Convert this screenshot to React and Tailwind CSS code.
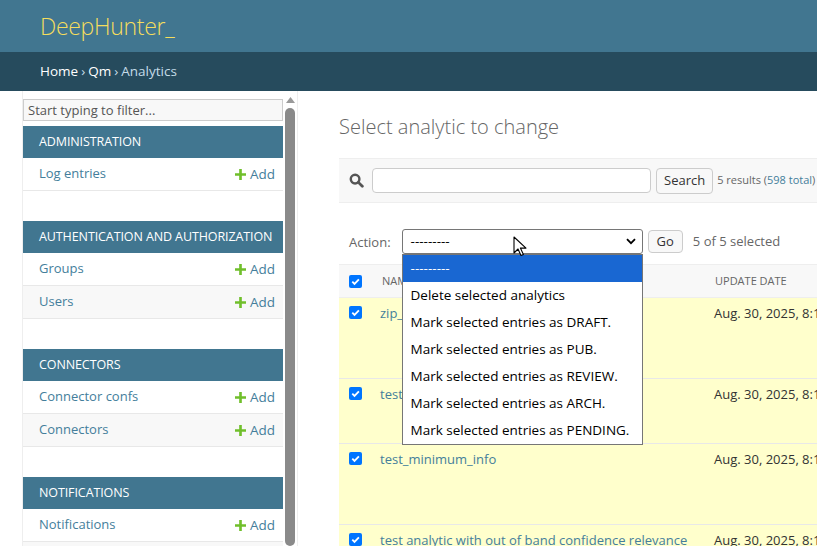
import { useState } from "react";

const font = { fontFamily: '"Open Sans", "Noto Sans", sans-serif' };

const modules = [
  { name: "Administration", rows: ["Log entries"] },
  { name: "Authentication and Authorization", rows: ["Groups", "Users"] },
  { name: "Connectors", rows: ["Connector confs", "Connectors"] },
  { name: "Notifications", rows: ["Notifications", "Notification levels"] },
];

const actions = [
  "---------",
  "Delete selected analytics",
  "Mark selected entries as DRAFT.",
  "Mark selected entries as PUB.",
  "Mark selected entries as REVIEW.",
  "Mark selected entries as ARCH.",
  "Mark selected entries as PENDING.",
];

const rows = [
  { name: "zip_file_analytic", h: "h-[81px]" },
  { name: "test_analytic_full", h: "h-[65px]" },
  { name: "test_minimum_info", h: "h-[81px]" },
  { name: "test analytic with out of band confidence relevance", h: "h-[81px]" },
];

function PlusIcon() {
  return (
    <svg width="11" height="11" viewBox="0 0 10 10" className="mr-[4px]">
      <path d="M3.8 0h2.4v3.8H10v2.4H6.2V10H3.8V6.2H0V3.8h3.8z" fill="#70bf2b" />
    </svg>
  );
}

function Checkbox() {
  return (
    <span className="inline-flex w-[13px] h-[13px] rounded-[2px] bg-[#0075ff] items-center justify-center">
      <svg width="11" height="11" viewBox="0 0 12 12">
        <path d="M2.5 6.2l2.4 2.4 4.8-5" stroke="#fff" strokeWidth="2" fill="none" />
      </svg>
    </span>
  );
}

function Sidebar() {
  return (
    <div className="flex shrink-0 h-full">
      <div className="w-[23px] border-r border-[#eeeeee]" />
      <div className="w-[275px] flex border-r border-[#eeeeee] overflow-hidden">
        <div className="w-[260px] pt-[6px]">
          <input
            className="w-[260px] h-[22px] border border-[#cccccc] bg-[#f8f8f8] px-[4px] text-[13px] text-[#333] placeholder:text-[#555] outline-none"
            placeholder="Start typing to filter..."
          />
          <div className="mt-[5px]">
            {modules.map((m) => (
              <div key={m.name} className="mb-[30px]">
                <div className="h-[32px] bg-[#417690] px-[16px] flex items-center text-[12.5px] text-white uppercase whitespace-nowrap tracking-[-0.1px]">
                  {m.name}
                </div>
                {m.rows.map((r, i) => (
                  <div
                    key={r}
                    className={`h-[33px] flex items-center justify-between pl-[16px] pr-[8px] border-b border-[#e8e8e8] text-[13px] text-[#447e9b] ${i % 2 ? "bg-[#f8f8f8]" : "bg-white"}`}
                  >
                    <span>{r}</span>
                    <span className="flex items-center text-[13.5px]">
                      <PlusIcon />
                      Add
                    </span>
                  </div>
                ))}
              </div>
            ))}
          </div>
        </div>
        <div className="w-[15px] flex flex-col items-center pt-[6px]">
          <svg width="9" height="6" viewBox="0 0 9 6">
            <path d="M0 6L4.5 0 9 6z" fill="#9a9a9a" />
          </svg>
          <div className="mt-[5px] w-[10px] flex-1 rounded-[5px] bg-[#8a8a8a]" />
        </div>
      </div>
    </div>
  );
}

export default function App() {
  const [filter, setFilter] = useState("");

  return (
    <div style={font} className="w-[817px] h-[546px] overflow-hidden bg-white flex flex-col text-[#333]">
      <div className="h-[52px] shrink-0 bg-[#417690] px-[40px] flex items-center">
        <span className="text-[23px] font-light text-[#f5dd5d] tracking-[-0.3px]">DeepHunter_</span>
      </div>
      <div className="h-[39px] shrink-0 bg-[#264b5d] px-[40px] flex items-center text-[13.5px] text-[#c4dce8]">
        <span className="text-white">Home</span>
        <span className="mx-[3px]">›</span>
        <span className="text-white">Qm</span>
        <span className="mx-[3px]">›</span>
        <span>Analytics</span>
      </div>
      <div className="flex flex-1 min-h-0">
        <Sidebar />
        <div className="flex-1 min-w-0 pl-[41px] pt-[22px] relative">
          <h1 className="text-[20px] font-light text-[#666] leading-[28px]">Select analytic to change</h1>
          <div className="mt-[17px] w-[600px]">
            <div className="h-[45px] bg-[#f8f8f8] border-t border-b border-[#eeeeee] flex items-center pl-[10px] text-[11px] text-[#666]">
              <svg width="15" height="15" viewBox="0 0 16 16" className="mr-[8px]">
                <circle cx="6.5" cy="6.5" r="4.6" stroke="#555" strokeWidth="2.6" fill="none" />
                <path d="M10 10l4.2 4.2" stroke="#555" strokeWidth="3" strokeLinecap="round" />
              </svg>
              <input
                value={filter}
                onChange={(e) => setFilter(e.target.value)}
                className="w-[279px] h-[25px] border border-[#cccccc] rounded-[4px] bg-white outline-none"
              />
              <button className="ml-[5px] h-[26px] px-[7px] border border-[#cccccc] rounded-[4px] bg-[#f8f8f8] text-[13px] text-[#333]">
                Search
              </button>
              <span className="ml-[4px]">
                5 results (<span className="text-[#447e9b]">598 total</span>)
              </span>
            </div>
            <div className="h-[61px] flex items-start pt-[26px] pl-[10px] text-[13px] text-[#666]">
              <span className="mt-[4px]">Action:</span>
              <div className="relative ml-[11px]">
                <div className="w-[241px] h-[25px] border border-[#767676] rounded-[3px] flex items-center justify-between pl-[8px] pr-[6px] text-[13.5px] text-black">
                  <span>---------</span>
                  <svg width="10" height="7" viewBox="0 0 10 7">
                    <path d="M1 1.2l4 4 4-4" stroke="#000" strokeWidth="1.8" fill="none" />
                  </svg>
                </div>
                <div className="absolute left-0 top-[25px] w-[241px] border border-[#767676] bg-white z-10 text-[13.5px] text-black">
                  {actions.map((a, i) => (
                    <div
                      key={a}
                      className={`h-[27px] flex items-center pl-[8px] ${i === 0 ? "bg-[#1967d2] text-white" : ""}`}
                    >
                      {a}
                    </div>
                  ))}
                </div>
                <svg width="14" height="22" viewBox="0 0 14 22" className="absolute left-[111px] top-[7px] z-20">
                  <path d="M1 1v16l4-4 3 6.5 2.4-1.1-3-6.3H13z" fill="#fff" stroke="#000" strokeWidth="1.1" strokeLinejoin="round" />
                </svg>
              </div>
              <button className="ml-[5px] mt-[1px] h-[23px] px-[8px] border border-[#cccccc] rounded-[4px] bg-[#f8f8f8] text-[13px] text-[#333]">
                Go
              </button>
              <span className="ml-[10px] mt-[3px]">5 of 5 selected</span>
            </div>
            <div className="w-[600px]">
              <div className="h-[34px] flex items-center bg-[#f8f8f8] border-t border-b border-[#eeeeee] text-[11px] text-[#666] uppercase">
                <div className="w-[43px] pl-[10px] flex">
                  <Checkbox />
                </div>
                <div className="w-[333px]">Name</div>
                <div>Update date</div>
              </div>
              {rows.map((r) => (
                <div key={r.name} className={`${r.h} flex items-start bg-[#ffffcc] border-b border-[#e8e8e8] text-[13px]`}>
                  <div className="w-[41px] pl-[10px] pt-[8px] flex">
                    <Checkbox />
                  </div>
                  <div className="w-[334px] pt-[6px] text-[#447e9b] whitespace-nowrap">{r.name}</div>
                  <div className="pt-[6px] whitespace-nowrap text-[#333]">Aug. 30, 2025, 8:16 p.m.</div>
                </div>
              ))}
            </div>
          </div>
        </div>
      </div>
    </div>
  );
}
